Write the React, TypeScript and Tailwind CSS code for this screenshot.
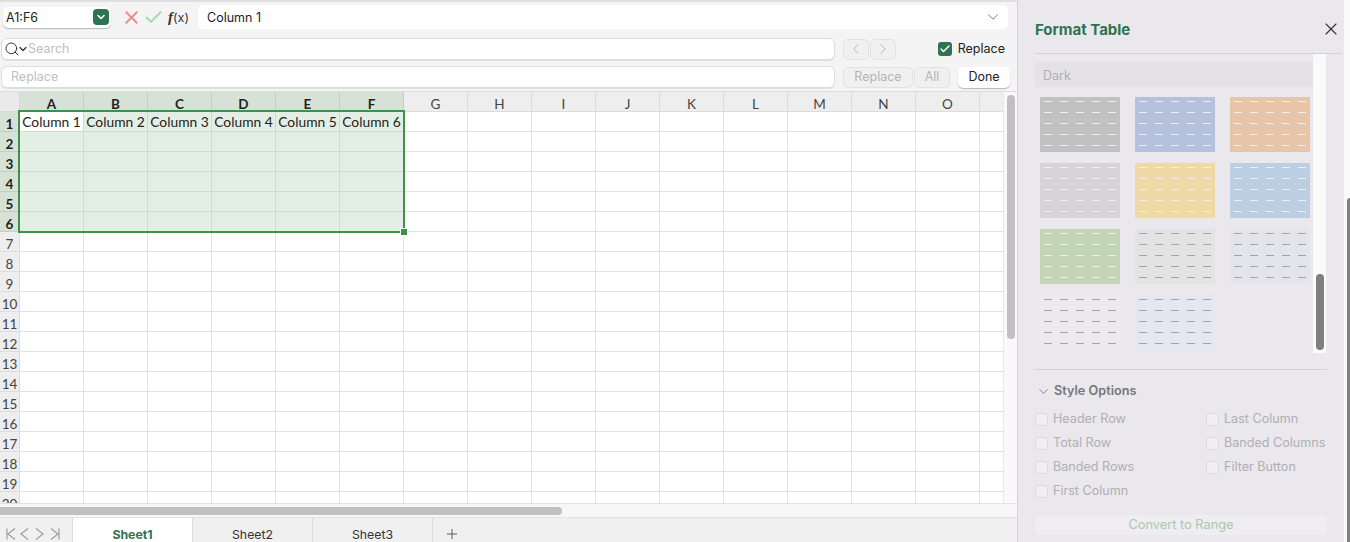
import { ChevronDown, ChevronLeft, ChevronRight, Check, Plus, Search, X } from 'lucide-react';

const ui = { fontFamily: 'Inter, "Liberation Sans", sans-serif' };
const cols = ['A', 'B', 'C', 'D', 'E', 'F', 'G', 'H', 'I', 'J', 'K', 'L', 'M', 'N', 'O', ''];
const rows = Array.from({ length: 20 }, (_, i) => i + 1);

const swatches = [
    { bg: 'bg-[#c1c1c1]', dash: '#eeeeee' },
    { bg: 'bg-[#b6c1dd]', dash: '#eeeeee' },
    { bg: 'bg-[#e7c5a8]', dash: '#eeeeee' },
    { bg: 'bg-[#d5d3d6]', dash: '#eeeeee' },
    { bg: 'bg-[#eed9a7]', dash: '#eeeeee' },
    { bg: 'bg-[#bccee2]', dash: '#eeeeee' },
    { bg: 'bg-[#c4d5b5]', dash: '#eeeeee' },
    { bg: 'bg-[#e3e3e3]', dash: '#a5a5a5' },
    { bg: 'bg-[#e4e5ea]', dash: '#a5a5a5' },
    { bg: 'bg-[#ebe9ec]', dash: '#a5a5a5' },
    { bg: 'bg-[#e4e7ef]', dash: '#a5a5a5' },
];

const styleOptions = [
    ['Header Row', 'Last Column'],
    ['Total Row', 'Banded Columns'],
    ['Banded Rows', 'Filter Button'],
    ['First Column', ''],
];

const Swatch = ({ bg, dash }: { bg: string; dash: string }) => (
    <div className={`${bg} w-20 h-[55px]`}>
        <svg width="80" height="55">
            {[4.5, 15.5, 26.5, 37.5, 48.5].map((y) => (
                <line key={y} x1="4" x2="76" y1={y} y2={y} stroke={dash} strokeWidth="1" strokeDasharray="8 8" />
            ))}
        </svg>
    </div>
);

const OptionCheck = ({ label }: { label: string }) => (
    <div className="flex items-center gap-[5px] h-6">
        <span className="w-[13px] h-[13px] rounded-[3px] bg-[#f0eef1] border border-[#dcdadd]" />
        <span className="text-[12.6px] text-[#b0afb2]">{label}</span>
    </div>
);

const Grid = () => (
    <div className="relative h-[411px] overflow-hidden bg-white" style={{ fontFamily: 'Lato, sans-serif' }}>
        {/* header */}
        <div className="flex h-5">
            <div className="w-5 shrink-0 bg-[#e9e9e9] border-r border-b border-[#d8d8d8]" />
            {cols.map((c, i) => (
                <div
                    key={i}
                    className={`w-16 shrink-0 flex items-center justify-center pt-[6px] leading-none border-r border-b text-[13.5px] ${
                        i < 6
                            ? 'bg-[#d6e2d6] border-[#c3cfc3] font-bold text-[#222]'
                            : 'bg-[#eeeeee] border-[#dcdcdc] text-[#444]'
                    }`}
                >
                    {c}
                </div>
            ))}
        </div>
        {/* rows */}
        {rows.map((r) => (
            <div key={r} className="flex h-5">
                <div
                    className={`w-5 shrink-0 flex items-center justify-center pt-[6px] leading-none border-r border-b text-[13.5px] ${
                        r <= 6
                            ? 'bg-[#d6e2d6] border-[#c3cfc3] font-bold text-[#222]'
                            : 'bg-[#eeeeee] border-[#dcdcdc] text-[#444]'
                    }`}
                >
                    {r}
                </div>
                {cols.map((c, i) => {
                    const selected = r <= 6 && i < 6;
                    const active = r === 1 && i === 0;
                    return (
                        <div
                            key={i}
                            className={`w-16 shrink-0 flex items-center justify-center pt-px leading-none border-r border-b text-[13.8px] text-[#222] ${
                                active ? 'bg-white border-[#d0dcd0]' : selected ? 'bg-[#e3efe4] border-[#cddacd]' : 'border-[#e2e2e2]'
                            }`}
                        >
                            {r === 1 && i < 6 ? `Column ${i + 1}` : ''}
                        </div>
                    );
                })}
            </div>
        ))}
        {/* selection */}
        <div className="absolute left-[18px] top-[18px] w-[387px] h-[123px] border-2 border-[#3e9149]" />
        <div className="absolute left-[400px] top-[136px] w-2 h-2 bg-[#3e9149] border border-white" />
    </div>
);

export default function App() {
    return (
        <div className="flex w-[1350px] h-[542px] overflow-hidden bg-[#f4f4f4]" style={ui}>
            {/* left */}
            <div className="w-[1018px] shrink-0 border-r border-[#d4d4d4] flex flex-col border-t-2 border-t-[#e0e0e0]">
                {/* formula bar */}
                <div className="flex shrink-0 items-center h-[33px] pb-[3px] pl-[3px] pr-[9px]">
                    <div className="flex items-center justify-between w-[108px] h-[21px] bg-white rounded-[5px] shadow-[0_1px_1px_rgba(0,0,0,0.25)] pl-[3px] pr-[2px] text-[12.5px] text-[#222]">
                        <span className="pt-[2px]">A1:F6</span>
                        <span className="w-4 h-4 rounded-[4px] bg-[#2f7350] flex items-center justify-center">
                            <ChevronDown className="w-3 h-3 text-white" strokeWidth={3} />
                        </span>
                    </div>
                    <X className="w-[21px] h-[21px] mr-[1.5px] ml-[9.5px] shrink-0 text-[#ee8d85]" strokeWidth={2.2} />
                    <Check className="w-[21px] h-[21px] shrink-0 text-[#9fdca8]" strokeWidth={2.2} />
                    <span className="ml-1 w-[26px] shrink-0 text-[12.5px] text-[#333] whitespace-nowrap">
                        <i className="text-[15px] font-bold" style={{ fontFamily: '"Liberation Serif", serif' }}>
                            f
                        </i>
                        (x)
                    </span>
                    <div className="ml-1 flex-1 h-6 bg-white rounded-[5px] flex items-center justify-between pl-[9px] pr-[6px] text-[12.5px] text-[#222]">
                        <span className="pt-[2px]">Column 1</span>
                        <ChevronDown className="w-[18px] h-[18px] text-[#777]" strokeWidth={1.3} />
                    </div>
                </div>
                {/* search */}
                <div className="flex shrink-0 items-center h-7 pl-[1px] pr-[12px]">
                    <div className="w-[834px] h-[22px] bg-white rounded-[6px] border border-[#dddddd] shadow-[0_1px_0_rgba(0,0,0,0.08)] flex items-center pl-[2px] text-[12.5px] text-[#c0c0c0]">
                        <Search className="w-4 h-4 shrink-0 text-[#333]" strokeWidth={1.5} />
                        <ChevronDown className="w-3 h-3 -ml-[3px] -mr-[1px] shrink-0 text-[#333]" strokeWidth={2.5} />
                        <span>Search</span>
                    </div>
                    <div className="ml-2 flex gap-px">
                        <span className="w-[26px] h-[21px] rounded-[5px] bg-[#f0f0f0] border border-[#e3e3e3] flex items-center justify-center">
                            <ChevronLeft className="w-[18px] h-[18px] text-[#b5b5b5]" strokeWidth={1.3} />
                        </span>
                        <span className="w-[26px] h-[21px] rounded-[5px] bg-[#f0f0f0] border border-[#e3e3e3] flex items-center justify-center">
                            <ChevronRight className="w-[18px] h-[18px] text-[#b5b5b5]" strokeWidth={1.3} />
                        </span>
                    </div>
                    <span className="ml-auto w-[14px] h-[14px] rounded-[3px] bg-[#2f7350] flex items-center justify-center">
                        <Check className="w-3 h-3 text-white" strokeWidth={3} />
                    </span>
                    <span className="ml-[6px] text-[12.5px] text-[#222]">Replace</span>
                </div>
                {/* replace */}
                <div className="flex shrink-0 items-center h-7 pl-[1px]">
                    <div className="w-[834px] h-[22px] bg-white rounded-[6px] border border-[#dddddd] shadow-[0_1px_0_rgba(0,0,0,0.08)] flex items-center px-[9px] text-[12.5px] text-[#c0c0c0]">
                        Replace
                    </div>
                    <span className="ml-2 w-[70px] h-[21px] rounded-[5px] bg-[#f0f0f0] border border-[#e3e3e3] flex items-center justify-center text-[12.5px] text-[#b5b5b5]">
                        Replace
                    </span>
                    <span className="ml-px w-9 h-[21px] rounded-[5px] bg-[#f0f0f0] border border-[#e3e3e3] flex items-center justify-center text-[12.5px] text-[#b5b5b5]">
                        All
                    </span>
                    <span className="ml-2 w-[52px] h-[21px] rounded-[5px] bg-white shadow-[0_1px_1px_rgba(0,0,0,0.25)] flex items-center justify-center text-[12.5px] text-[#222]">
                        Done
                    </span>
                </div>
                {/* sheet + vertical scrollbar */}
                <div className="flex shrink-0 border-t border-[#dcdcdc]">
                    <div className="w-[1003px] overflow-hidden">
                        <Grid />
                    </div>
                    <div className="flex-1 bg-[#f9f9f9] border-l border-[#e8e8e8] pt-[3px] flex justify-center">
                        <div className="w-2 h-[244px] rounded-full bg-[#c0c0c0]" />
                    </div>
                </div>
                {/* horizontal scrollbar */}
                <div className="h-[15px] shrink-0 bg-[#f7f7f7] border-b border-[#e2e2e2] border-t pt-[3px]">
                    <div className="w-[562px] h-2 rounded-r-full bg-[#c0c0c0]" />
                </div>
                {/* tabs */}
                <div className="flex flex-1 min-h-0 overflow-hidden items-stretch bg-[#f0f0f0] text-[12.3px] leading-none text-[#333]">
                    <div className="w-[72px] flex items-center pt-[7px] pl-[1px] text-[#9a9a9a]">
                        <svg className="w-[15px] h-3 shrink-0" viewBox="0 0 15 12" fill="none" stroke="currentColor" strokeWidth="1.1">
                            <path d="M6 .5v11M14 .5 7 6l7 5.5" />
                        </svg>
                        <svg className="w-[15px] h-3 shrink-0" viewBox="0 0 15 12" fill="none" stroke="currentColor" strokeWidth="1.1">
                            <path d="M12 .5 5 6l7 5.5" />
                        </svg>
                        <svg className="w-[15px] h-3 shrink-0" viewBox="0 0 15 12" fill="none" stroke="currentColor" strokeWidth="1.1">
                            <path d="M5 .5 12 6l-7 5.5" />
                        </svg>
                        <svg className="w-[15px] h-3 shrink-0" viewBox="0 0 15 12" fill="none" stroke="currentColor" strokeWidth="1.1">
                            <path d="M13 .5v11M5 .5 12 6l-7 5.5" />
                        </svg>
                    </div>
                    <div className="w-[121px] pt-[10px] bg-white border-x border-[#dcdcdc] flex items-center justify-center font-bold text-[#2f7350]">
                        Sheet1
                    </div>
                    <div className="w-[120px] pt-[10px] border-r border-[#dcdcdc] flex items-center justify-center">Sheet2</div>
                    <div className="w-[120px] pt-[10px] border-r border-[#dcdcdc] flex items-center justify-center">Sheet3</div>
                    <div className="w-[38px] pt-[8px] flex items-center justify-center">
                        <Plus className="w-4 h-4 text-[#555]" strokeWidth={1.4} />
                    </div>
                </div>
            </div>

            {/* format table panel */}
            <div className="relative flex-1 bg-[#eae8ec] pl-[17px] pr-[23px] flex flex-col">
                <div className="flex items-center justify-between h-[54px] -mr-[15px] border-b border-[#d3d1d5] pt-[4px]">
                    <span className="pt-[4px] text-[15px] font-bold text-[#2f7350]">Format Table</span>
                    <X className="w-5 h-5 text-[#333] mr-[1px]" strokeWidth={1.4} />
                </div>
                <div className="flex h-[299px]">
                    <div className="w-[278px] pt-[8px]">
                        <div className="h-[25px] bg-[#e4e2e6] flex items-center pl-2 pt-[4px] text-[12.5px] text-[#b0afb2]">Dark</div>
                        <div className="grid grid-cols-[80px_80px_80px] gap-x-[15px] gap-y-[11px] pt-[10px] pl-[5px]">
                            {swatches.map((s, i) => (
                                <Swatch key={i} bg={s.bg} dash={s.dash} />
                            ))}
                        </div>
                    </div>
                    <div className="w-[13px] bg-[#fafafa] relative">
                        <div className="absolute left-[3px] top-[220px] w-2 h-[76px] rounded-full bg-[#7f7f7f]" />
                    </div>
                </div>
                <div className="mt-[16px] border-t border-[#d3d1d5]" />
                <div className="flex items-center gap-[3px] h-[20px] mt-[11px] pl-[1px] text-[12.7px] font-semibold text-[#77767a]">
                    <ChevronDown className="w-[15px] h-[15px]" strokeWidth={1.4} />
                    Style Options
                </div>
                <div className="mt-[6px] flex flex-col">
                    {styleOptions.map(([a, b]) => (
                        <div key={a} className="flex">
                            <div className="w-[171px]">
                                <OptionCheck label={a} />
                            </div>
                            {b && <OptionCheck label={b} />}
                        </div>
                    ))}
                </div>
                <div className="mt-[12px] h-[20px] rounded-[5px] bg-[#efedf0] flex items-center justify-center text-[12.8px] text-[#a9c9b4]">
                    Convert to Range
                </div>
                {/* outer panel scrollbar */}
                <div className="absolute right-0 top-0 bottom-0 w-[6px] bg-[#fafafa]">
                    <div className="absolute right-0 top-[198px] bottom-0 w-[3px] rounded-tl-full bg-[#808080]" />
                </div>
            </div>
        </div>
    );
}
